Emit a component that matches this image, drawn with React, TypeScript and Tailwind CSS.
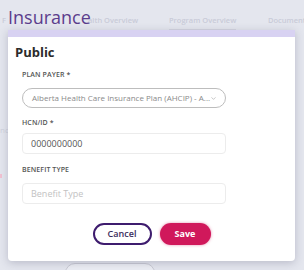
import { ChevronDown } from "lucide-react";

const font = { fontFamily: '"Open Sans", "Noto Sans", sans-serif' };

function Label({ children }: { children: React.ReactNode }) {
  return (
    <div className="text-[7px] leading-[10px] font-semibold uppercase tracking-[0.1px] text-[#555]">
      {children}
    </div>
  );
}

export default function App() {
  return (
    <div className="relative h-[270px] w-[304px] overflow-hidden bg-[#e4e6ee]" style={font}>
      {/* page behind the dim overlay */}
      <div className="pl-[8px] pt-[4px]">
        <div className="text-[18px] leading-[26px] text-[#5b3d8c]">Insurance</div>
      </div>
      <div className="absolute inset-x-0 top-[15px] h-[16px] overflow-hidden whitespace-nowrap text-[7.5px] font-semibold text-[#c9cbd8]">
        <span className="absolute left-[2px]">F</span>
        <span className="absolute left-[88px]">alth Overview</span>
        <span className="absolute left-[169px] border-b border-[#d3d4e0] pb-[3px]">Program Overview</span>
        <span className="absolute left-[268px]">Documents</span>
      </div>
      <div className="absolute left-0 top-[124px] text-[8px] text-[#cfd1dc]">nc</div>
      <div className="absolute left-0 top-[174px] h-[4px] w-[2px] bg-[#f2c2d2]" />
      <div className="absolute left-[65px] top-[263px] h-[20px] w-[90px] rounded-full border border-[#c9cad3] bg-[#eceef4]" />

      {/* modal */}
      <div className="absolute left-[8px] top-[30px] flex h-[231px] w-[287px] flex-col overflow-hidden rounded-b-[4px] bg-white shadow-[0_2px_8px_rgba(60,60,90,0.25)]">
        <div className="h-[7px] bg-[#d8d2f2]" />
        <div className="flex flex-col px-[7px] pt-[7px]">
          <div className="text-[13px] leading-[16px] font-bold text-[#2b2b2b]">Public</div>
          <div className="flex w-[211px] flex-col pl-[7px] pt-[10px]">
            <Label>Plan Payer *</Label>
            <div className="mt-[8px] flex h-[20px] items-center justify-between rounded-full border border-[#bdbdbd] pl-[9px] pr-[9px]">
              <span className="whitespace-nowrap text-[8px] text-[#8a8a8a]">
                Alberta Health Care Insurance Plan (AHCIP) - A...
              </span>
              <ChevronDown className="h-[7px] w-[7px] shrink-0 text-[#a0a0a0]" strokeWidth={2} />
            </div>
            <div className="mt-[9.5px]">
              <Label>HCN/ID *</Label>
            </div>
            <div className="mt-[5.5px] flex h-[21px] items-center rounded-[4px] border border-[#ececec] pl-[8px] text-[9px] text-[#555]">
              0000000000
            </div>
            <div className="mt-[10.5px]">
              <Label>Benefit Type</Label>
            </div>
            <div className="mt-[8.5px] flex h-[21px] items-center rounded-[4px] border border-[#ececec] pl-[8px] text-[9px] text-[#c2c2c2]">
              Benefit Type
            </div>
          </div>
        </div>
        <div className="mt-[19px] flex justify-center gap-[8px]">
          <button className="flex h-[22px] w-[59px] items-center justify-center rounded-full border-2 border-[#3e1c6e] text-[9px] font-semibold text-[#3b2d5c]">
            Cancel
          </button>
          <button className="flex h-[22px] w-[51px] items-center justify-center rounded-full bg-[#d0185b] text-[9px] font-bold text-white shadow-[0_0_3px_rgba(208,24,91,0.5)]">
            Save
          </button>
        </div>
      </div>
    </div>
  );
}
